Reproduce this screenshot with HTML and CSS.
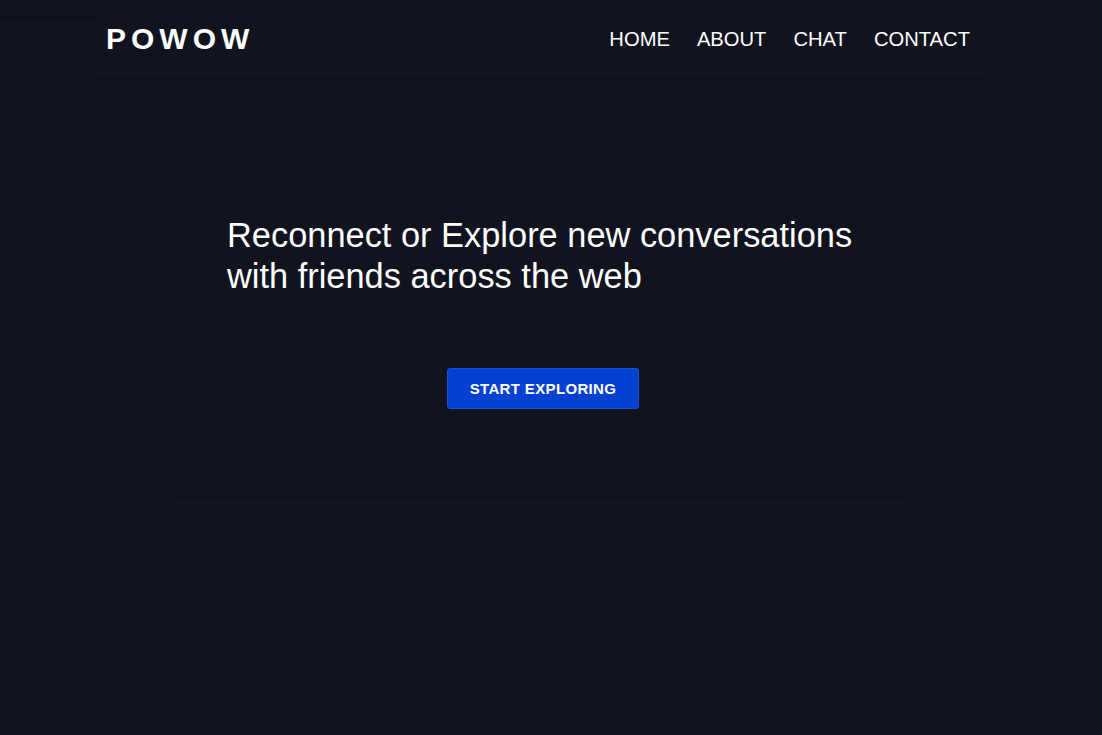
FILE: index.html
```html
<!DOCTYPE html>
<html lang="en">
<head>
<meta charset="utf-8">
<title>Powow</title>
<link rel="stylesheet" href="styles.css">
</head>
<body>
<div class="page">
  <header class="site-header">
    <div class="logo">POWOW</div>
    <nav class="nav">
      <a href="#">HOME</a>
      <a href="#">ABOUT</a>
      <a href="#">CHAT</a>
      <a href="#">CONTACT</a>
    </nav>
  </header>
  <section class="hero">
    <h1 class="hero-title">Reconnect or Explore new conversations with friends across the web</h1>
    <div class="hero-actions">
      <a class="btn" href="#">START EXPLORING</a>
    </div>
  </section>
</div>
</body>
</html>
```

FILE: styles.css
```css
html, body {
  margin: 0;
  padding: 0;
}
body {
  background: #11131f;
  color: #ffffff;
  font-family: "Liberation Sans", Arial, sans-serif;
  min-height: 735px;
  position: relative;
}
body::before {
  content: "";
  position: absolute;
  left: 0;
  top: 15px;
  width: 94px;
  height: 5px;
  background: #0e1019;
}
.page {
  width: 890px;
  margin-left: 94px;
}
.site-header {
  height: 78px;
  border-bottom: 3px solid #0e1019;
  display: flex;
  align-items: center;
  justify-content: space-between;
  padding: 0 14px 0 12px;
}
.logo {
  font-size: 30px;
  font-weight: 700;
  letter-spacing: 5px;
  line-height: 1;
}
.nav {
  display: flex;
  gap: 27px;
}
.nav a {
  color: #ffffff;
  text-decoration: none;
  font-size: 20.2px;
  line-height: 1;
}
.hero {
  width: 738px;
  margin-left: 78px;
  padding-top: 134px;
  padding-bottom: 88px;
  border-bottom: 2px solid #0d0f19;
}
.hero-title {
  margin: 0 0 0 55px;
  max-width: 660px;
  font-size: 34.4px;
  font-weight: 400;
  line-height: 41.3px;
}
.hero-actions {
  display: flex;
  justify-content: center;
  padding-left: 4px;
  margin-top: 70px;
}
.btn {
  display: block;
  background: #0341d1;
  border: 1px solid #1a4fd6;
  border-radius: 3px;
  color: #ffffff;
  text-decoration: none;
  font-size: 15px;
  font-weight: 700;
  line-height: 17px;
  padding: 11px 22px 11px 22px;
  letter-spacing: 0.35px;
}
```
